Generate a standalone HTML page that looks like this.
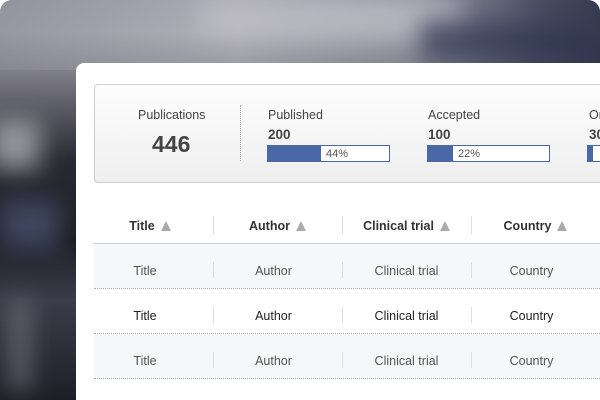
<!DOCTYPE html>
<html><head><style>
*{margin:0;padding:0;box-sizing:border-box}
body{width:600px;height:400px;background:#fff;overflow:hidden;font-family:"Liberation Sans",sans-serif}
.frame{position:absolute;left:0;top:0;width:600px;height:400px;border-radius:12px 12px 0 0;overflow:hidden;
background:linear-gradient(180deg,#9d9ca8 0%,#a9a8b2 8%,#6e6d78 22%,#2a2a33 40%,#1c1c24 60%,#3a3d4a 75%,#1e1e26 100%)}
.frame:before{content:"";position:absolute;left:0;top:0;width:600px;height:70px;background:linear-gradient(90deg,rgba(140,140,150,.6),rgba(190,190,198,.4) 40%,rgba(120,125,140,.3) 70%,rgba(40,45,70,.7) 90%,rgba(30,35,55,.8))}
.bl{position:absolute;filter:blur(12px);opacity:.7}
.card{position:absolute;left:76px;top:63px;width:540px;height:350px;background:#fff;border-radius:8px 0 0 0}
.stats{position:absolute;left:18px;top:21px;width:520px;height:99px;border:1px solid #cfcfcf;border-radius:4px;background:linear-gradient(#fdfdfd,#efefef)}
.lab{position:absolute;font-size:12.5px;color:#444}
.num{position:absolute;font-weight:bold;color:#444}
.bar{position:absolute;height:17px;border:1px solid #4a68a6;background:#fff;width:123px}
.bar i{position:absolute;left:0;top:0;bottom:0;background:#4a68a6}
.bar span{position:absolute;top:2px;font-size:11px;color:#555}
.div{position:absolute;left:145px;top:20px;height:56px;border-left:1px dotted #aaa}
.th{position:absolute;top:156px;height:26px;font-size:12.5px;font-weight:bold;color:#333;text-align:center;line-height:14px}
.tri{display:inline-block;width:0;height:0;border-left:5px solid transparent;border-right:5px solid transparent;border-bottom:10px solid #aaa;margin-left:6px;vertical-align:-1px}
.hline{position:absolute;left:18px;top:180px;width:530px;border-top:1px solid #cfcfcf}
.row{position:absolute;left:18px;width:530px;height:45px;border-bottom:1px dotted #aaa}
.c{position:absolute;top:20px;width:129px;text-align:center;font-size:12.5px;line-height:14px}
.sep{position:absolute;top:18px;height:16px;border-left:1px solid #ddd}
.hs{position:absolute;top:153px;height:18px;border-left:1px solid #ddd}
</style></head><body>
<div class="frame">
<div class="bl" style="left:-10px;top:120px;width:50px;height:50px;background:#b8b8be"></div>
<div class="bl" style="left:0;top:200px;width:60px;height:50px;background:#4c5675"></div>
<div class="bl" style="left:10px;top:300px;width:20px;height:90px;background:#7a7a85"></div>
<div class="bl" style="left:200px;top:0;width:260px;height:35px;background:#c2c1c9"></div>
<div class="bl" style="left:420px;top:20px;width:180px;height:40px;background:#2e3550"></div>
<div class="card">
 <div class="stats">
  <div class="lab" style="left:43px;top:23px">Publications</div>
  <div class="num" style="left:57px;top:46px;font-size:23px">446</div>
  <div class="div"></div>
  <div class="lab" style="left:173px;top:23px">Published</div>
  <div class="num" style="left:173px;top:42px;font-size:13.5px">200</div>
  <div class="bar" style="left:172px;top:60px"><i style="width:53px"></i><span style="left:58px">44%</span></div>
  <div class="lab" style="left:333px;top:23px">Accepted</div>
  <div class="num" style="left:333px;top:42px;font-size:13.5px">100</div>
  <div class="bar" style="left:332px;top:60px"><i style="width:25px"></i><span style="left:30px">22%</span></div>
  <div class="lab" style="left:494px;top:23px">Ongoing</div>
  <div class="num" style="left:494px;top:42px;font-size:13.5px">300</div>
  <div class="bar" style="left:492px;top:60px"><i style="width:5px"></i></div>
 </div>
 <div class="th" style="left:28px;width:92px">Title<span class="tri"></span></div>
 <div class="th" style="left:137px;width:129px">Author<span class="tri"></span></div>
 <div class="th" style="left:266px;width:129px">Clinical trial<span class="tri"></span></div>
 <div class="th" style="left:395px;width:129px">Country<span class="tri"></span></div>
 <div class="hs" style="left:137px"></div><div class="hs" style="left:266px"></div><div class="hs" style="left:395px"></div>
 <div class="hline"></div>
 <div class="row" style="top:181px;background:#f6f7f9;color:#555">
  <div class="c" style="left:0;width:102px">Title</div><div class="c" style="left:115px">Author</div><div class="c" style="left:248px">Clinical trial</div><div class="c" style="left:373px">Country</div>
  <div class="sep" style="left:119px"></div><div class="sep" style="left:248px"></div><div class="sep" style="left:377px"></div>
 </div>
 <div class="row" style="top:226px;background:#fff;color:#222">
  <div class="c" style="left:0;width:102px">Title</div><div class="c" style="left:115px">Author</div><div class="c" style="left:248px">Clinical trial</div><div class="c" style="left:373px">Country</div>
  <div class="sep" style="left:119px"></div><div class="sep" style="left:248px"></div><div class="sep" style="left:377px"></div>
 </div>
 <div class="row" style="top:271px;background:#f6f7f9;color:#555">
  <div class="c" style="left:0;width:102px">Title</div><div class="c" style="left:115px">Author</div><div class="c" style="left:248px">Clinical trial</div><div class="c" style="left:373px">Country</div>
  <div class="sep" style="left:119px"></div><div class="sep" style="left:248px"></div><div class="sep" style="left:377px"></div>
 </div>
</div>
</div>
</body></html>
